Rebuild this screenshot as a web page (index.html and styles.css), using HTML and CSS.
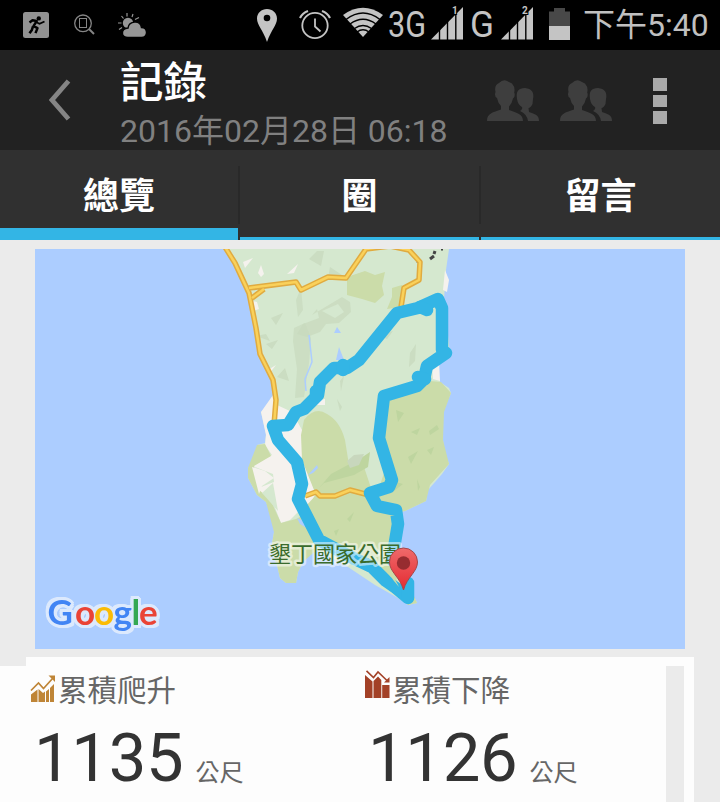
FILE: index.html
```html
<!DOCTYPE html>
<html lang="zh-TW">
<head>
    <meta charset="UTF-8">
    <meta name="viewport" content="width=device-width, initial-scale=1.0">
    <title>記錄</title>
    <link rel="stylesheet" href="styles.css">
</head>
<body>
    <div class="status-bar">
        <svg class="icon-run" width="26" height="26" viewBox="0 0 26 26">
            <rect width="26" height="26" rx="2.5" fill="#929292"/>
            <circle cx="15.8" cy="6.4" r="2.2" fill="#000"/>
            <path d="M6.5 10.5l3-2.2 4.2.8-3.2 5 4 2-2 5M10 14.500l-1.300 3.800-2.200 3" fill="none" stroke="#000" stroke-width="2.500" stroke-linejoin="round"/>
            <path d="M12 9.500l4.500 2.300 5-2.300" fill="none" stroke="#000" stroke-width="1.900"/>
        </svg>
        <svg class="icon-search" width="22" height="22" viewBox="0 0 22 22" fill="none" stroke="#858585">
            <circle cx="9" cy="9.3" r="8.3" stroke-width="1.3"/>
            <rect x="5.5" y="4.5" width="7" height="9" stroke-width="1"/>
            <path d="M15 15l5 5" stroke-width="2"/>
        </svg>
        <svg class="icon-weather" width="29" height="25" viewBox="0 0 29 25">
            <g stroke="#969696" stroke-width="1.2">
                <path d="M9 0v3.500M15 1l-1 3M3.500 3l2 2.500M0 10h3.500M17 6.500l4-2M1 16.500l3-2"/>
            </g>
            <circle cx="10" cy="10" r="5.200" fill="#969696"/>
            <path d="M10 24.500c-7.500 0-7.500-9 0-9.500 1-7.500 12.500-8 13.500-.5 6.500 0 7 10 0 10z" fill="#969696" stroke="#000" stroke-width="1.500"/>
        </svg>
        <svg class="icon-place" width="20" height="33" viewBox="0 0 20 33">
            <path d="M10 0C4.500 0 0 4 0 9.500 0 16 6 21 10 33c4-12 10-17 10-23.500C20 4 15.500 0 10 0z" fill="#c4c4c4"/>
            <circle cx="10" cy="9" r="3.300" fill="#000"/>
        </svg>
        <svg class="icon-alarm" width="32" height="32" viewBox="0 0 32 32" fill="none" stroke="#c4c4c4" stroke-width="1.800">
            <circle cx="16" cy="17.500" r="12.700"/>
            <path d="M16 10.500v8l5.500 5"/>
            <path d="M1 10Q3.500 5 9 3M31 10Q28.500 5 23 3" stroke-width="2.200"/>
        </svg>
        <svg class="icon-wifi" width="40" height="31" viewBox="0 0 40 31">
            <path d="M20 30L0 8Q20-6.500 40 8z" fill="#c4c4c4"/>
            <path d="M3 12.500Q20-.5 37 12.500M7 17Q20 7.500 33 17M11.500 21.500Q20 15.500 28.500 21.500M14 25Q20 20.500 26 25" fill="none" stroke="#000" stroke-width="1.500"/>
        </svg>
        <svg class="net-type" width="40" height="36" viewBox="0 0 40 36">
            <text class="net-text" x="0" y="30" textLength="38" lengthAdjust="spacingAndGlyphs">3G</text>
        </svg>
        <svg class="icon-signal" width="32" height="34" viewBox="0 0 32 34">
            <path d="M0 33.500L32 1v32.500z" fill="#c4c4c4"/>
            <path d="M8.500 0v34M16.500 0v34M24.800 0v34" stroke="#000" stroke-width="1.400"/>
            <text class="sim" x="21" y="8">1</text>
        </svg>
        <svg class="net-type-short" width="24" height="36" viewBox="0 0 24 36">
            <text class="net-text" x="-1" y="30" textLength="24" lengthAdjust="spacingAndGlyphs">G</text>
        </svg>
        <svg class="icon-signal second" width="32" height="34" viewBox="0 0 32 34">
            <path d="M0 33.500L32 1v32.500z" fill="#c4c4c4"/>
            <path d="M8.500 0v34M16.500 0v34M24.800 0v34" stroke="#000" stroke-width="1.400"/>
            <text class="sim" x="21" y="8">2</text>
        </svg>
        <svg class="icon-battery" width="21" height="32" viewBox="0 0 21 32">
            <path d="M0 3.500h5V0h11v3.500h5V18H0z" fill="#484848"/>
            <rect y="18" width="21" height="14" fill="#c4c4c4"/>
        </svg>
        <span class="clock">下午5:40</span>
    </div>

    <div class="header">
        <svg class="back" width="22" height="42" viewBox="0 0 22 42">
            <path d="M19.500 2L3 21l16.500 19" fill="none" stroke="#858585" stroke-width="4.800"/>
        </svg>
        <div class="titles">
            <div class="title">記錄</div>
            <div class="date">2016年02月28日 06:18</div>
        </div>
        <svg class="people" width="52" height="41" viewBox="0 0 52 41">
            <path d="M0 41C0 33 6 32.500 14 29.500V26q-3-3-4-8-3-2-1.500-6Q7 5 12 3q4-4 8-2l5 2.500q3.500 4 2.200 9 1.500 4-1.200 6-1 5-4 8v3.500c8 3 14 4 14 11z" fill="#3e3e3e"/>
            <path d="M41 41q-1-7-8-10 3-2 2-4-4-2-5-8-2-11 8-11 10 1 8 11l-.5 5q-2 4-4 4l.5 4c6 2 10 3 10 9z" fill="#3e3e3e"/>
        </svg>
        <svg class="people" width="52" height="41" viewBox="0 0 52 41">
            <path d="M0 41C0 33 6 32.500 14 29.500V26q-3-3-4-8-3-2-1.500-6Q7 5 12 3q4-4 8-2l5 2.500q3.500 4 2.200 9 1.500 4-1.200 6-1 5-4 8v3.500c8 3 14 4 14 11z" fill="#3e3e3e"/>
            <path d="M41 41q-1-7-8-10 3-2 2-4-4-2-5-8-2-11 8-11 10 1 8 11l-.5 5q-2 4-4 4l.5 4c6 2 10 3 10 9z" fill="#3e3e3e"/>
        </svg>
        <div class="menu">
            <span></span>
            <span></span>
            <span></span>
        </div>
    </div>

    <div class="tabs">
        <div class="tab active">總覽</div>
        <div class="divider"></div>
        <div class="tab">圈</div>
        <div class="divider"></div>
        <div class="tab">留言</div>
    </div>

    <svg class="map" width="650" height="400" viewBox="35 249 650 400">
        <rect x="35" y="249" width="650" height="400" fill="#accdff"/>

        <!-- land -->
        <path d="M225 249L236 267 246 288 250 305 256 330 260 352 270 373 275 392 273 404 261 412 266 434 265 443 257 445 258 455 248 468 248 478 257 495 266 502 273 520 274 532 271 550 277 565 280 578 286 583H296L298 572 303 562 313 549 345 565 375 585 398 598 408 605 417 603 412 592 400 560 395 513 405 511 426 501 428 490 442 474 449 464 444 450 442 430 443 412 451 393 449 388 440 382 437 365 450 354 444 298 445 287 446 270 449 249z" fill="#d5e8cf"/>

        <!-- built-up area -->
        <path d="M273 395L261 412 266 435 265 445 272 455 254 465 260 492 272 500 281 523 290 520 300 510 311 506 316 490 307 470 303 450 302 430 292 412 277 405z" fill="#f5f2ee"/>
        <path d="M243 262l10-4-8 10zM258 273l3-8 3 9-3 3zM287 274l11-10-4 9zM248 300l9 2 2 7-6 2zM266 371l10-6-7 9zM313 401l12-2v6h-8zM432 365l7-4 1 20-7-2z" fill="#f5f2ee"/>
        <path d="M445 270l4 10-2 12-4-2z" fill="#f5f2ee"/>

        <!-- park -->
        <path d="M384 397L410 390 430 381 441 382 451 393 444 412 443 440 449 464 430 485 426 501 405 511 395 513 375 500 385 470 379 440z" fill="#cbdca9"/>
        <path d="M257 445L265 444 271 456 254 466 259 490 270 499 281 523 296 519 302 516 320 547 303 562 298 572 296 583H286L280 578 277 565 271 550 274 532 266 502 257 495 248 478 248 468z" fill="#cbdca9"/>
        <path d="M304 420Q315 406 327 414 340 421 345 440L349 465 362 461 375 500 394 515 397 590 412 592 417 603 408 605 375 570 321 545 306 506 316 495 302 460 301 435z" fill="#cbdca9"/>
        <path d="M255 467l18 7 1 8-13 5zM262 493l11-10 5 28z" fill="#d5e8cf"/>
        <path d="M252 467l13 4 9 7-12 8-3 8z" fill="#f5f2ee"/>

        <!-- terrain shading -->
        <path d="M347 277l18-6 10 4 10-3-3 14 2 9-9 8-13-4-15-4zM392 288l10-3 2 9-3 13-14 2 5-12z" fill="#cbdca9"/>
        <g fill="#c8dabe">
            <path d="M312 315l30-18 8 5 1 10-12 11-13 1-6 8-13 5-10-3 6-10 16-6-2-9zM322 311l13 7 9-6-6-8z" fill-rule="evenodd" opacity=".75"/>
            <path d="M294 328l11-5 6 15-2 25-5 34-9 1 2-29-4-28zM296 300l5-12 2 22-5 7z" opacity=".7"/>
            <path d="M330 267l12 8-14 4zM309 259l8-8h7l-3 15zM410 353l6-9-1 17-6 6zM378 335l15-4-6 8zM340 381l4-5-3 15zM337 399l5 8-2 4z" opacity=".8"/>
            <path d="M256 336l10-2 4 7zM277 377l8-9 4 13zM271 318l12-5-7 12zM266 344l12-4-6 9z" opacity=".8"/>
            <path d="M361 458l9-6-2 15-14 8-30 8-5 5 12-14zM347 519l7-7-4 10zM334 531l5-2-3 7zM389 480l14 4-9 7zM408 457l10-6-7 13zM427 450l7-3-3 8zM417 479l3 8-2 4zM429 431l8-6 2 4-9 6zM411 432l9-4-3 7zM396 410l8 3-6 9z" fill="#bed59f"/>
            <path d="M347 461l7-6 10-1-5 11-9 3z" fill="#c8d7bd"/>
        </g>

        <!-- inland water and buildings -->
        <path d="M334 333l3-6 4 6zM336 360l3-13 5 13zM308 475l9-10 1 3-5 5zM297 518l7 3 4 8-8-5z" fill="#accdff"/>
        <path d="M309 335l3 27-7 17 1 12" fill="none" stroke="#accdff" stroke-width="1.500"/>
        <path d="M430 259l4-3M434 254l1-3M417 261l2 1M441 249h2" stroke="#444" stroke-width="3"/>

        <!-- roads -->
        <path class="road" d="M225 247L235 263 249 293 256 328 260 354 273 380 276 400 274 425M249 288L296 282 301 290 328 277 346 278 366 249 390 246 409 250 420 262 419 280 404 288 401 307M252 298L264 289M305 496L316 492 320 496 335 496 350 490 369 495"/>
        <path class="road road-inner" d="M225 247L235 263 249 293 256 328 260 354 273 380 276 400 274 425M249 288L296 282 301 290 328 277 346 278 366 249 390 246 409 250 420 262 419 280 404 288 401 307M252 298L264 289M305 496L316 492 320 496 335 496 350 490 369 495"/>

        <!-- recorded track -->
        <g class="track">
            <path d="M408 598L396 588 386 581 372 567 351 557 319 540 298 499 302 484 297 462 278 440 273 426 288 425 296 412 304 409 318 395 320 382 334 368 347 368 359 360 397 313 418 308 438 299 442 308 442 350 446 353 427 366 424 379 417 386 384 396 379 438 392 480 389 487 370 493 377 506 396 510 398 524 392 560"/>
            <path d="M408 583V597M420 307L427 310M418 377L425 379M343 365V370M316 391V396"/>
        </g>
        <path d="M386 561L399 587 394 581 381 563z" fill="#cbdca9"/>

        <text class="place-name" x="269" y="562">墾丁國家公園</text>

        <!-- pin -->
        <defs>
            <linearGradient id="pin" x1="0" y1="0" x2="0" y2="1">
                <stop offset="0" stop-color="#ef6a6b"/>
                <stop offset="1" stop-color="#e42a31"/>
            </linearGradient>
        </defs>
        <path d="M403.500 590C400 577 389.500 572 389.500 562a14 14 0 0 1 28 0C417.500 572 407 577 403.500 590z" fill="url(#pin)" stroke="#a5484a" stroke-width="1"/>
        <circle cx="403.500" cy="563" r="6.700" fill="#972c30"/>

        <text class="google" y="625"><tspan x="47.500" fill="#4285f4">G</tspan><tspan x="75" fill="#ea4335">o</tspan><tspan x="94" fill="#fbbc05">o</tspan><tspan x="113.500" fill="#4285f4">g</tspan><tspan x="131.500" fill="#34a853">l</tspan><tspan x="139" fill="#ea4335">e</tspan></text>
    </svg>

    <div class="card">
        <div class="stats">
            <div class="stat">
                <div class="stat-label">
                    <svg width="26" height="28" viewBox="0 0 26 28">
                        <path d="M1 19.500L7.500 14.500V27H1zM8.500 14l4.500 4 2-1.500V27H8.500zM16 16.500l3-2.500V27h-3zM20 13l4-4v18h-4z" fill="#bf8537"/>
                        <path d="M1 15.500L8.500 8l5 5.500L23 3" fill="none" stroke="#bf8537" stroke-width="1.700"/>
                        <path d="M18.500 0.500H25V7z" fill="#bf8537"/>
                    </svg>
                    <span>累積爬升</span>
                </div>
                <div class="stat-value">1135<span class="unit">公尺</span></div>
            </div>
            <div class="stat">
                <div class="stat-label">
                    <svg class="down" width="26" height="28" viewBox="0 0 26 28">
                        <path d="M0 5l7.500 6.500V28H0zM8.500 11L13 6.500 16.300 10v18H8.500zM17.200 15H24.500v13h-7.300z" fill="#a34127"/>
                        <path d="M1.500.8L8.500 7.500 13 2l9.500 9" fill="none" stroke="#a34127" stroke-width="1.600"/>
                        <path d="M24.500 7v5.500H19z" fill="#a34127"/>
                    </svg>
                    <span>累積下降</span>
                </div>
                <div class="stat-value">1126<span class="unit">公尺</span></div>
            </div>
        </div>
        <div class="side-strip"></div>
    </div>
</body>
</html>
```
FILE: styles.css
```css
* {
    box-sizing: border-box;
}

body {
    margin: 0;
    width: 720px;
    height: 802px;
    overflow: hidden;
    background-color: #ebebeb;
    font-family: Roboto, "Noto Sans CJK TC", sans-serif;
}

.status-bar {
    display: flex;
    height: 50px;
    padding-left: 23px;
    background-color: #000;
    color: #c0c0c0;
}

.status-bar svg {
    flex: none;
    overflow: visible;
}

.icon-run {
    margin-top: 12px;
}

.icon-search {
    margin: 14px 0 0 25px;
}

.icon-weather {
    margin: 13px 0 0 22px;
}

.icon-place {
    margin: 9px 0 0 110px;
}

.icon-alarm {
    margin: 8px 0 0 22px;
}

.icon-wifi {
    margin: 7px 0 0 12px;
}

.net-type {
    margin: 7px 0 0 5px;
}

.net-type-short {
    margin: 7px 0 0 8px;
}

.icon-signal {
    margin: 6px 0 0 3px;
}

.icon-signal.second {
    margin-left: 6px;
}

.net-text {
    font-size: 37px;
    fill: #c4c4c4;
}

.sim {
    font-size: 10px;
    font-weight: bold;
    fill: #c4c4c4;
    stroke: #000;
    stroke-width: 2px;
    paint-order: stroke;
}

.icon-battery {
    margin: 8px 0 0 16px;
}

.clock {
    margin-left: 13px;
    font-size: 32px;
    line-height: 50px;
    white-space: nowrap;
}

.header {
    display: flex;
    height: 100px;
    background-color: #222;
}

.back {
    margin: 29px 0 0 49px;
}

.titles {
    width: 367px;
    margin-left: 49px;
}

.title {
    height: 62px;
    padding-top: 3px;
    color: #fff;
    font-size: 43.5px;
    line-height: 62px;
    font-weight: 500;
}

.date {
    color: #808080;
    font-size: 32px;
    line-height: 38px;
    white-space: nowrap;
}

.people {
    margin: 30px 21px 0 0;
}

.menu {
    display: flex;
    flex-direction: column;
    gap: 4px;
    margin: 28px 0 0 20px;
}

.menu span {
    width: 14px;
    height: 12.5px;
    background-color: #aaa;
}

.tabs {
    display: flex;
    height: 90px;
    background-color: #303030;
}

.tab {
    flex: 1;
    height: 90px;
    border-bottom: 3px solid #33b5e5;
    color: #fff;
    font-size: 36px;
    font-weight: bold;
    line-height: 94px;
    text-align: center;
}

.tab.active {
    flex: none;
    width: 238px;
    border-bottom-width: 12px;
}

.divider {
    width: 2px;
    height: 58px;
    margin-top: 16px;
    background-color: #292929;
}

.map {
    display: block;
    margin: 9px 0 0 35px;
}

.road {
    fill: none;
    stroke: #e0ab40;
    stroke-width: 5.5px;
    stroke-linejoin: round;
}

.road-inner {
    stroke: #fad15a;
    stroke-width: 2.5px;
}

.track {
    fill: none;
    stroke: #33b5e5;
    stroke-width: 12.5px;
    stroke-linejoin: round;
    stroke-linecap: round;
}

.place-name {
    font-size: 22px;
    fill: #3a6b2c;
    stroke: rgba(255, 255, 255, 0.5);
    stroke-width: 5px;
    stroke-linejoin: round;
    paint-order: stroke;
}

.google {
    font-family: Lato, sans-serif;
    font-size: 35px;
    font-weight: bold;
    filter: drop-shadow(2px 0 0 #dce9fd) drop-shadow(-2px 0 0 #dce9fd) drop-shadow(0 2px 0 #dce9fd) drop-shadow(0 -2px 0 #dce9fd) drop-shadow(1px 1px 0 #dce9fd) drop-shadow(-1px -1px 0 #dce9fd);
}

.card {
    display: flex;
    width: 668px;
    height: 145px;
    margin: 8px 0 0 26px;
    padding-top: 9px;
    background-color: #fdfdfd;
}

.stats {
    display: flex;
    flex: none;
    width: 666px;
    margin-left: -26px;
    padding-left: 30px;
    background-color: #fdfdfd;
}

.stat {
    width: 334px;
    flex: none;
}

.stat-label {
    display: flex;
    height: 50px;
    color: #666;
    font-size: 29.5px;
    line-height: 51px;
}

.stat-label svg {
    margin: 9px 2px 0 0;
}

.stat-label svg.down {
    margin: 4px 1px 0 1px;
}

.stat-value {
    padding-left: 4px;
    color: #333;
    font-size: 67px;
    line-height: 84px;
    letter-spacing: -0.3px;
    white-space: nowrap;
}

.unit {
    margin-left: 12px;
    color: #666;
    font-size: 24px;
    letter-spacing: 0;
}

.side-strip {
    width: 18px;
    background-color: #ebebeb;
}
```
